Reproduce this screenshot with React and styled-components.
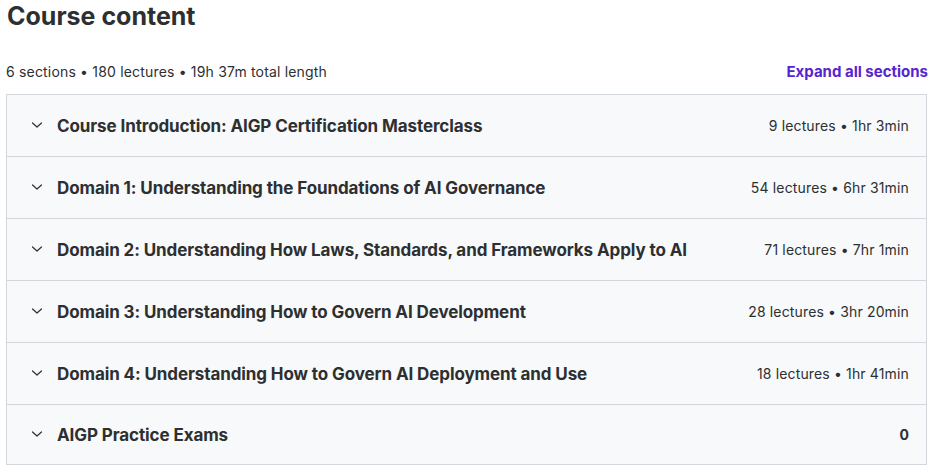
import React from 'react';
import styled, { createGlobalStyle } from 'styled-components';

const sections = [
    { title: 'Course Introduction: AIGP Certification Masterclass', meta: '9 lectures • 1hr 3min' },
    { title: 'Domain 1: Understanding the Foundations of AI Governance', meta: '54 lectures • 6hr 31min' },
    { title: 'Domain 2: Understanding How Laws, Standards, and Frameworks Apply to AI', meta: '71 lectures • 7hr 1min' },
    { title: 'Domain 3: Understanding How to Govern AI Development', meta: '28 lectures • 3hr 20min' },
    { title: 'Domain 4: Understanding How to Govern AI Deployment and Use', meta: '18 lectures • 1hr 41min' },
    { title: 'AIGP Practice Exams', meta: '0', bold: true },
];

const Chevron = () => (
    <svg width="16" height="16" viewBox="0 0 16 16" fill="none">
        <path d="M3.5 6 L8 10 L12.5 6" stroke="#2d2f31" strokeWidth="1.2" strokeLinecap="round" strokeLinejoin="round" />
    </svg>
);

const CourseContent = () => {
    return (
        <Page>
            <GlobalStyle />
            <Title>Course content</Title>
            <Summary>
                <span>6 sections • 180 lectures • 19h 37m total length</span>
                <ExpandLink>Expand all sections</ExpandLink>
            </Summary>
            <Panel>
                {sections.map((s, index) => (
                    <Row key={index}>
                        <Icon><Chevron /></Icon>
                        <RowTitle>{s.title}</RowTitle>
                        <Meta $bold={s.bold}>{s.meta}</Meta>
                    </Row>
                ))}
            </Panel>
        </Page>
    );
}

const GlobalStyle = createGlobalStyle`
    body {
        margin: 0;
        background: #fff;
        font-family: "Inter", "Liberation Sans", sans-serif;
        color: #2d2f31;
    }
`;

const Page = styled.div`
    padding: 0 6px 0 6px;
`;

const Title = styled.h2`
    margin: 0;
    padding-left: 1px;
    font-size: 25px;
    font-weight: 700;
    line-height: 32px;
    color: #2d2f31;
`;

const Summary = styled.div`
    display: flex;
    justify-content: space-between;
    align-items: center;
    height: 18px;
    margin-top: 31px;
    margin-bottom: 13px;
    font-size: 14px;
    line-height: 18px;
    letter-spacing: 0.18px;
    color: #2d2f31;
`;

const ExpandLink = styled.button`
    border: none;
    background: none;
    padding: 0;
    margin-right: -1px;
    font-family: inherit;
    font-size: 15px;
    line-height: 18px;
    font-weight: 700;
    color: #5624d0;
    cursor: pointer;
`;

const Panel = styled.div`
    border: 1px solid #d1d7dc;
    border-top: none;
`;

const Row = styled.div`
    display: flex;
    align-items: center;
    height: 61px;
    padding: 0 17px 0 22px;
    background: #f7f9fa;
    border-top: 1px solid #d1d7dc;

    &:last-child {
        height: 59px;
    }
`;

const Icon = styled.span`
    display: flex;
    width: 16px;
    height: 16px;
    margin-top: -2px;
    margin-right: 12px;
`;

const RowTitle = styled.span`
    flex: 1;
    font-size: 17px;
    font-weight: 700;
    letter-spacing: -0.1px;
    color: #2d2f31;
`;

const Meta = styled.span`
    font-size: 14px;
    letter-spacing: 0.15px;
    font-weight: ${p => (p.$bold ? 700 : 400)};
    color: #2d2f31;
`;

export default CourseContent;
